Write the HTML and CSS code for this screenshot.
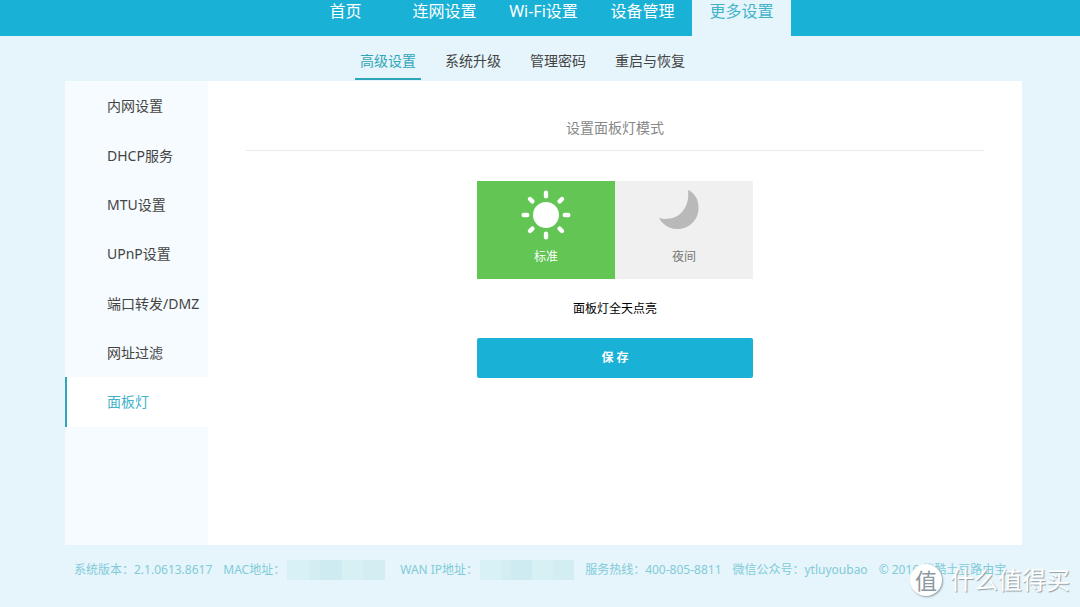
FILE: index.html
```html
<!DOCTYPE html>
<html lang="zh-CN">
<head>
<meta charset="utf-8">
<meta name="viewport" content="width=device-width, initial-scale=1">
<title>面板灯</title>
<link rel="stylesheet" href="styles.css">
</head>
<body>
<header class="topbar">
  <nav class="topnav">
    <a href="#">首页</a>
    <a href="#">连网设置</a>
    <a href="#">Wi-Fi设置</a>
    <a href="#">设备管理</a>
    <a href="#" class="current">更多设置</a>
  </nav>
</header>
<div class="page">
  <nav class="subnav">
    <a href="#" class="current">高级设置</a>
    <a href="#">系统升级</a>
    <a href="#">管理密码</a>
    <a href="#">重启与恢复</a>
  </nav>
  <div class="panel">
    <nav class="sidebar">
      <a href="#">内网设置</a>
      <a href="#">DHCP服务</a>
      <a href="#">MTU设置</a>
      <a href="#">UPnP设置</a>
      <a href="#">端口转发/DMZ</a>
      <a href="#">网址过滤</a>
      <a href="#" class="current">面板灯</a>
    </nav>
    <main class="content">
      <h1 class="title">设置面板灯模式</h1>
      <form class="form">
        <div class="modes">
          <label class="mode">
            <input type="radio" name="mode" value="standard" checked>
            <svg class="icon" viewBox="0 0 52 52" aria-hidden="true">
              <circle cx="26" cy="26" r="13" fill="#fff"/>
              <g stroke="#fff" stroke-width="4.400" stroke-linecap="round">
                <path d="M26 3.700v3.500M26 44.800v3.500M3.700 26h3.500M44.800 26h3.500M10 10l2.400 2.400M39.600 39.600l2.400 2.400M10 42l2.400-2.400M39.600 12.400l2.400-2.400"/>
              </g>
            </svg>
            <span>标准</span>
          </label>
          <label class="mode">
            <input type="radio" name="mode" value="night">
            <svg class="icon" viewBox="0 0 52 52" aria-hidden="true">
              <path d="M30 1C37 4 41 11 40.500 20A21 21 0 0 1 1 29C8 31 17 30 23 24C29 18 31 10 30 1Z" fill="#b9b9b9"/>
            </svg>
            <span>夜间</span>
          </label>
        </div>
        <p class="hint">面板灯全天点亮</p>
        <button class="save" type="button">保 存</button>
      </form>
    </main>
  </div>
  <footer class="footer">
    <span>系统版本：2.1.0613.8617</span>
    <span class="field wide">MAC地址：<i class="mask"><b></b><b></b><b></b><b></b><b></b></i></span>
    <span class="field">WAN IP地址：<i class="mask"><b></b><b></b><b></b><b></b><b></b></i></span>
    <span>服务热线：400-805-8811</span>
    <span>微信公众号：ytluyoubao</span>
    <span>© 2016 优酷土豆路由宝</span>
  </footer>
</div>
<div class="brand"><span class="seal">值</span><span>什么值得买</span></div>
</body>
</html>
```
FILE: styles.css
```css
* { box-sizing: border-box; }

body {
  position: relative;
  min-height: 100vh;
  margin: 0;
  background: #e6f5fb;
  color: #444;
  font: 14px/20px "Noto Sans", "Noto Sans CJK SC", sans-serif;
}

a { color: inherit; text-decoration: none; }

.topbar {
  padding: 0 58px 0 65px;
  background: #1ab1d6;
}

.topnav {
  display: grid;
  grid-template-columns: repeat(5, 99px);
  justify-content: center;
  color: #fff;
  font-size: 16px;
  line-height: 22px;
  text-align: center;
}

.topnav a { padding-bottom: 14px; white-space: nowrap; }

.topnav .current { background: #e6f5fb; color: #42b3ca; }

.page { padding: 0 58px 0 65px; }

.subnav {
  display: flex;
  gap: 19px;
  padding: 10px 0 1px 290px;
}

.subnav a {
  padding: 5px 5px 7px;
  border-bottom: 2px solid transparent;
}

.subnav .current { border-color: #2fa5b8; color: #2fa5b8; }

.panel {
  display: flex;
  min-height: 464px;
  background: #fff;
}

.sidebar {
  flex: none;
  width: 143px;
  background: #f5fbfe;
}

.sidebar a {
  display: flex;
  align-items: center;
  height: 49px;
  padding-left: 40px;
  border-left: 2px solid transparent;
  white-space: nowrap;
}

.sidebar a:nth-child(3n + 1) { height: 50px; }

.sidebar .current {
  border-color: #2fa5b8;
  background: #fff;
  color: #42b3ca;
}

.content { flex: 1; padding: 37px 38px 0 38px; }

.title {
  margin: 0 0 30px;
  padding-bottom: 12px;
  border-bottom: 1px solid #eaeaea;
  color: #888;
  font-size: 14px;
  font-weight: 400;
  text-align: center;
}

.form { width: 276px; margin: 0 auto; font-size: 12px; }

.modes { display: grid; grid-template-columns: 1fr 1fr; }

.mode {
  display: flex;
  flex-direction: column;
  align-items: center;
  gap: 6px;
  padding: 8px 0 12px;
  background: #f0f0f0;
  color: #777;
}

.mode:has(:checked) { background: #62c554; color: #fff; }

.mode input { position: absolute; opacity: 0; }

.icon { width: 52px; height: 52px; }

.hint { margin: 20px 0 19px; color: #000; text-align: center; }

.save {
  display: block;
  width: 100%;
  padding: 10px;
  border: 0;
  border-radius: 2px;
  background: #1ab1d6;
  color: #fff;
  font: bold 12px/20px "Noto Sans", "Noto Sans CJK SC", sans-serif;
}

.footer {
  display: flex;
  gap: 11px;
  padding: 15px 0 27px 9px;
  color: #81cbd9;
  font-size: 12px;
  white-space: nowrap;
}

.field { display: flex; gap: 2px; }

.mask {
  display: grid;
  grid-template-columns: 2fr 1fr 2fr 2fr 2fr;
  width: 94px;
  height: 20px;
  background: #d3eef3;
}

.wide { margin-right: 4px; }
.wide .mask { width: 98px; }

.mask b:nth-child(1) { background: #d8f1f6; }
.mask b:nth-child(3) { background: #cdebf1; }
.mask b:nth-child(4) { background: #d6f0f4; }

.brand {
  position: absolute;
  right: 10px;
  bottom: 10px;
  display: flex;
  align-items: center;
  gap: 8px;
  color: #fff;
  font-size: 24px;
  line-height: 34px;
  text-shadow: 1px 1px 1px #8f9ea6;
}

.seal {
  width: 32px;
  height: 32px;
  border-radius: 50%;
  background: #fff;
  box-shadow: 1px 1px 2px #8f9ea6;
  color: #8d999e;
  font-size: 22px;
  line-height: 32px;
  text-align: center;
  text-shadow: none;
}
```
